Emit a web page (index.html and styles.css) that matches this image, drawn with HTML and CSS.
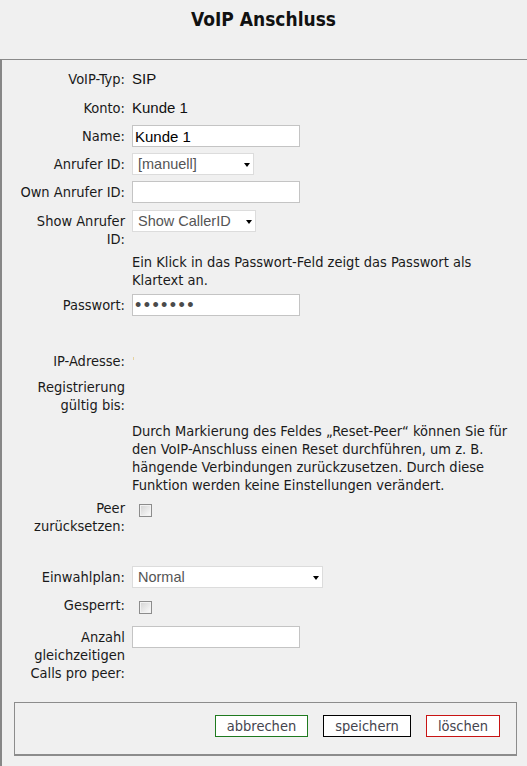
FILE: index.html
```html
<!DOCTYPE html>
<html lang="de">
<head>
<meta charset="utf-8">
<title>VoIP Anschluss</title>
<link rel="stylesheet" href="styles.css">
</head>
<body>
<header class="head"><h1 class="title">VoIP Anschluss</h1></header>
<main class="panel">
  <div class="form">
    <div class="row r-voip"><div class="lbl">VoIP-Typ:</div><div class="val txt">SIP</div></div>
    <div class="row r-konto"><div class="lbl">Konto:</div><div class="val txt">Kunde 1</div></div>
    <div class="row"><div class="lbl">Name:</div><div class="val"><input class="inp" type="text" value="Kunde 1"></div></div>
    <div class="row"><div class="lbl">Anrufer ID:</div><div class="val"><span class="sel sel-s"><select><option>[manuell]</option></select></span></div></div>
    <div class="row"><div class="lbl">Own Anrufer ID:</div><div class="val"><input class="inp" type="text" value=""></div></div>
    <div class="row r-show"><div class="lbl">Show Anrufer ID:</div><div class="val"><span class="sel sel-m"><select><option>Show CallerID</option></select></span></div></div>
    <div class="row r-info"><div class="lbl"></div><div class="val note">Ein Klick in das Passwort-Feld zeigt das Passwort als Klartext an.</div></div>
    <div class="row"><div class="lbl">Passwort:</div><div class="val"><input class="inp pw" type="password" value="1234567"></div></div>
    <div class="row r-ip"><div class="lbl">IP-Adresse:</div><div class="val txt"><span class="ipmark"></span></div></div>
    <div class="row"><div class="lbl">Registrierung gültig bis:</div><div class="val txt"></div></div>
    <div class="row r-long"><div class="lbl"></div><div class="val note">Durch Markierung des Feldes „Reset-Peer“ können Sie für den VoIP-Anschluss einen Reset durchführen, um z. B. hängende Verbindungen zurückzusetzen. Durch diese Funktion werden keine Einstellungen verändert.</div></div>
    <div class="row"><div class="lbl">Peer zurücksetzen:</div><div class="val"><input class="chk" type="checkbox"></div></div>
    <div class="row r-plan"><div class="lbl">Einwahlplan:</div><div class="val"><span class="sel sel-l"><select><option>Normal</option></select></span></div></div>
    <div class="row r-lock"><div class="lbl">Gesperrt:</div><div class="val"><input class="chk" type="checkbox"></div></div>
    <div class="row"><div class="lbl">Anzahl gleichzeitigen Calls pro peer:</div><div class="val"><input class="inp" type="text" value=""></div></div>
  </div>
  <div class="actions">
    <button class="btn btn-cancel" type="button">abbrechen</button>
    <button class="btn btn-save" type="button">speichern</button>
    <button class="btn btn-delete" type="button">löschen</button>
  </div>
</main>
</body>
</html>
```
FILE: styles.css
```css
html, body {
  margin: 0;
  padding: 0;
  background: #f0f0f0;
}
body {
  width: 527px;
  height: 766px;
  overflow: hidden;
  font-family: "DejaVu Sans Condensed", "DejaVu Sans", sans-serif;
  font-size: 14.5px;
  color: #1a1a1a;
}
.head {
  height: 59px;
}
.title {
  margin: 0;
  padding-top: 7px;
  font-size: 19px;
  line-height: 24px;
  font-weight: bold;
  text-align: center;
  color: #111;
}
.panel {
  box-sizing: border-box;
  height: 707px;
  border-top: 1px solid #8a8a8a;
  border-left: 2px solid #878787;
}
.form {
  padding-top: 5px;
}
.row {
  display: grid;
  grid-template-columns: 107px 382px;
  column-gap: 7px;
  padding: 3px 0 3px 16px;
}
.lbl {
  text-align: right;
  padding-top: 2px;
  line-height: 18px;
}
.txt {
  padding-top: 2px;
  line-height: 18px;
  font-family: "Liberation Sans", Arial, sans-serif;
  font-size: 15px;
  color: #111;
}
.note {
  padding-top: 2px;
  line-height: 18px;
}
.r-voip { padding-bottom: 6px; }
.r-konto { padding-bottom: 5px; }
.r-show { padding-top: 4px; padding-bottom: 0; }
.r-info { padding-bottom: 2px; }
.r-ip { margin-top: 28px; }
.r-long { padding-bottom: 0; }
.r-plan { margin-top: 25px; }
.r-lock { padding-bottom: 9px; }

.inp {
  display: block;
  box-sizing: border-box;
  width: 168px;
  height: 22px;
  margin: 0;
  padding: 0 2px;
  border: 1px solid #c4c4c4;
  border-radius: 0;
  background: #fff;
  font-family: "Liberation Sans", Arial, sans-serif;
  font-size: 15px;
  color: #000;
  outline: none;
}
.pw {
  font-size: 18px;
  letter-spacing: 2.4px;
  color: #4a4a4a;
  padding-left: 2px;
}
.sel {
  position: relative;
  display: block;
  height: 22px;
}
.sel-s { width: 122px; }
.sel-m { width: 124px; }
.sel-l { width: 191px; }
.sel select {
  -webkit-appearance: none;
  appearance: none;
  display: block;
  box-sizing: border-box;
  width: 100%;
  height: 22px;
  margin: 0;
  padding: 0 0 0 5px;
  border: 1px solid #dcdcdc;
  border-radius: 0;
  background: #fff;
  font-family: "Liberation Sans", Arial, sans-serif;
  font-size: 14.5px;
  color: #555;
  outline: none;
}
.sel::after {
  content: "";
  position: absolute;
  right: 4px;
  top: 10px;
  border-left: 3.5px solid transparent;
  border-right: 3.5px solid transparent;
  border-top: 4px solid #000;
  pointer-events: none;
}
.chk {
  -webkit-appearance: none;
  appearance: none;
  display: block;
  box-sizing: border-box;
  width: 13px;
  height: 13px;
  margin: 7px 0 0 7px;
  border: 1px solid #8c8c8c;
  border-radius: 0;
  background: linear-gradient(135deg, #d2d2d2, #fdfdfd);
  box-shadow: inset 0 0 0 1px #f2f2f2;
}
.ipmark {
  display: inline-block;
  width: 1px;
  height: 3px;
  margin-left: 1px;
  vertical-align: 6px;
  background: #e6d2a0;
}
.actions {
  box-sizing: border-box;
  width: 503px;
  height: 54px;
  margin: 17px 0 0 12px;
  padding: 12px 16px 0 0;
  border: 1px solid #8c8c8c;
  border-bottom-width: 2px;
  display: flex;
  justify-content: flex-end;
  align-items: flex-start;
  gap: 15px;
}
.btn {
  box-sizing: border-box;
  height: 22px;
  margin: 0;
  padding: 0;
  background: #fff;
  border: 1px solid #000;
  border-radius: 0;
  font-family: "DejaVu Sans Condensed", "DejaVu Sans", sans-serif;
  font-size: 14.5px;
  line-height: 20px;
  color: #44444e;
}
.btn-cancel { width: 93px; border-color: #1f7a1f; }
.btn-save { width: 88px; border-color: #000; }
.btn-delete { width: 74px; border-color: #c81414; }
```
